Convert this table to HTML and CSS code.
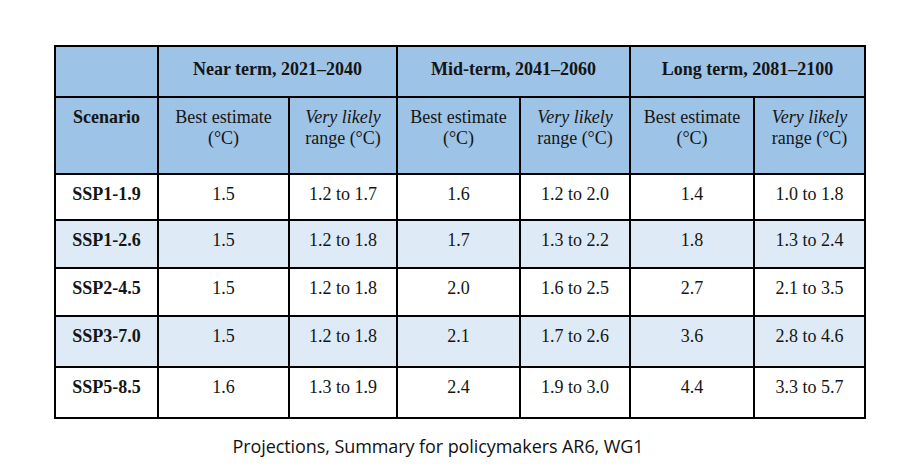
FILE: index.html
```html
<!DOCTYPE html>
<html>
<head>
<meta charset="utf-8">
<link rel="stylesheet" href="styles.css">
</head>
<body>
<div class="page">
  <table class="proj">
    <colgroup>
      <col class="c-scn"><col class="c-b1"><col class="c-r1"><col class="c-b2"><col class="c-r2"><col class="c-b3"><col class="c-r3">
    </colgroup>
    <thead>
      <tr class="h1">
        <th></th>
        <th colspan="2">Near term, 2021–2040</th>
        <th colspan="2">Mid-term, 2041–2060</th>
        <th colspan="2">Long term, 2081–2100</th>
      </tr>
      <tr class="h2">
        <th class="scn">Scenario</th>
        <td>Best estimate<br>(°C)</td>
        <td><i>Very likely</i><br>range (°C)</td>
        <td>Best estimate<br>(°C)</td>
        <td><i>Very likely</i><br>range (°C)</td>
        <td>Best estimate<br>(°C)</td>
        <td><i>Very likely</i><br>range (°C)</td>
      </tr>
    </thead>
    <tbody>
      <tr class="r1"><th>SSP1-1.9</th><td>1.5</td><td>1.2 to 1.7</td><td>1.6</td><td>1.2 to 2.0</td><td>1.4</td><td>1.0 to 1.8</td></tr>
      <tr class="r2 alt"><th>SSP1-2.6</th><td>1.5</td><td>1.2 to 1.8</td><td>1.7</td><td>1.3 to 2.2</td><td>1.8</td><td>1.3 to 2.4</td></tr>
      <tr class="r3"><th>SSP2-4.5</th><td>1.5</td><td>1.2 to 1.8</td><td>2.0</td><td>1.6 to 2.5</td><td>2.7</td><td>2.1 to 3.5</td></tr>
      <tr class="r4 alt"><th>SSP3-7.0</th><td>1.5</td><td>1.2 to 1.8</td><td>2.1</td><td>1.7 to 2.6</td><td>3.6</td><td>2.8 to 4.6</td></tr>
      <tr class="r5"><th>SSP5-8.5</th><td>1.6</td><td>1.3 to 1.9</td><td>2.4</td><td>1.9 to 3.0</td><td>4.4</td><td>3.3 to 5.7</td></tr>
    </tbody>
  </table>
  <div class="caption">Projections, Summary for policymakers AR6, WG1</div>
</div>
</body>
</html>
```
FILE: styles.css
```css
html, body {
  margin: 0;
  padding: 0;
  background: #ffffff;
}
.page {
  width: 916px;
  height: 472px;
  padding-top: 45px;
  box-sizing: border-box;
}
.proj {
  margin-left: 54px;
  border-collapse: collapse;
  table-layout: fixed;
  width: 810px;
  font-family: "Liberation Serif", "Times New Roman", serif;
  font-size: 18px;
  color: #151515;
}
.c-scn { width: 103px; }
.c-b1 { width: 131px; }
.c-r1 { width: 108px; }
.c-b2 { width: 123px; }
.c-r2 { width: 110px; }
.c-b3 { width: 124px; }
.c-r3 { width: 111px; }
.proj th, .proj td {
  border: 2px solid #000000;
  text-align: center;
  vertical-align: top;
  padding: 0;
  line-height: 21px;
}
.proj thead th, .proj thead td {
  background: #9dc3e6;
}
.proj th { font-weight: bold; }
.proj td { font-weight: normal; }
.h1 th { height: 51px; padding-top: 12px; box-sizing: border-box; }
.h2 th, .h2 td { height: 77px; padding-top: 9px; box-sizing: border-box; }
.proj tbody th, .proj tbody td { padding-top: 9px; box-sizing: border-box; }
.r1 th { height: 46px; }
.r2 th, .r3 th { height: 48px; }
.r4 th, .r5 th { height: 51px; }
.alt th, .alt td { background: #deebf7; }
.caption {
  margin-top: 15px;
  padding-right: 40px;
  text-align: center;
  font-family: "Open Sans", "Liberation Sans", sans-serif;
  font-size: 18px;
  line-height: 24px;
  color: #111111;
  letter-spacing: -0.08px;
}
```
